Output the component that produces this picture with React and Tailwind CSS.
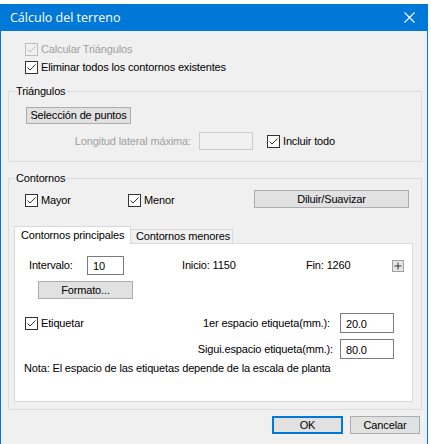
import React from "react";

function Check({ checked = true, disabled = false }) {
  return (
    <span
      className={`flex h-[13px] w-[13px] shrink-0 items-center justify-center border ${
        disabled ? "border-[#bcbcbc] bg-[#f0f0f0]" : "border-[#333333] bg-white"
      }`}
    >
      {checked && (
        <svg width="11" height="11" viewBox="0 0 11 11">
          <path
            d="M1.5 5.5 L4 8 L9.5 2.5"
            fill="none"
            stroke={disabled ? "#bcbcbc" : "#333333"}
            strokeWidth="1"
          />
        </svg>
      )}
    </span>
  );
}

function CheckRow({ label, disabled = false, className = "" }) {
  return (
    <div className={`flex h-[13px] items-center gap-[3px] ${className}`}>
      <Check disabled={disabled} />
      <span className={`whitespace-nowrap leading-[13px] ${disabled ? "text-[#a0a0a0]" : "text-black"}`}>{label}</span>
    </div>
  );
}

function Btn({ children, className = "" }) {
  return (
    <div className={`flex items-center justify-center whitespace-nowrap border border-[#adadad] bg-[#e1e1e1] leading-[13px] text-black ${className}`}>
      {children}
    </div>
  );
}

function Field({ value, className = "" }) {
  return (
    <div className={`flex items-center border border-[#7a7a7a] bg-white pl-[5px] pt-[2px] leading-[13px] ${className}`}>
      {value}
    </div>
  );
}

export default function App() {
  return (
    <div className="min-h-[444px] w-[431px] bg-white pt-[4px] font-['Liberation_Sans',Arial,sans-serif] text-[11px] tracking-[-0.15px] text-black">
      <div className="w-[428px] border-x border-b border-[#0078d7] bg-[#f0f0f0]">
        {/* title bar */}
        <div className="flex h-[27px] items-center justify-between bg-[#0078d7] pl-[9px] pr-[12px]">
          <span className="font-['Open_Sans','Noto_Sans',sans-serif] text-[12.5px] leading-[18px] tracking-normal text-white">
            Cálculo del terreno
          </span>
          <svg width="11" height="11" viewBox="0 0 11 11">
            <path d="M0.5 0.5 L10.5 10.5 M10.5 0.5 L0.5 10.5" stroke="#ffffff" strokeWidth="1.1" />
          </svg>
        </div>

        <div className="pt-[12px]">
          <div className="flex flex-col gap-[5px] pl-[24px]">
            <CheckRow label="Calcular Triángulos" disabled />
            <CheckRow label="Eliminar todos los contornos existentes" />
          </div>

          {/* Triángulos */}
          <fieldset className="ml-[7px] mt-[11px] w-[414px] border border-[#dcdcdc] pb-[11px]">
            <legend className="ml-[6px] px-[1px] leading-[13px]">Triángulos</legend>
            <div className="pl-[17px] pt-[9px]">
              <Btn className="h-[17px] w-[105px]">Selección de puntos</Btn>
            </div>
            <div className="mt-[8px] flex h-[18px] items-center">
              <span className="w-[182px] text-right leading-[13px] text-[#a0a0a0]">Longitud lateral máxima:</span>
              <div className="ml-[8px] h-[18px] w-[54px] border border-[#cccccc] bg-[#f0f0f0]" />
              <CheckRow label="Incluir todo" className="ml-[14px]" />
            </div>
          </fieldset>

          {/* Contornos */}
          <fieldset className="ml-[7px] mt-[10px] w-[414px] border border-[#dcdcdc] pb-[7px]">
            <legend className="ml-[6px] px-[1px] leading-[13px]">Contornos</legend>
            <div className="mt-[5px] flex h-[18px] items-end pl-[16px]">
              <CheckRow label="Mayor" className="mb-[1px] w-[103px]" />
              <CheckRow label="Menor" className="mb-[1px] w-[126px]" />
              <Btn className="h-[18px] w-[155px]">Diluir/Suavizar</Btn>
            </div>

            <div className="ml-[5px] mt-[18px] w-[399px]">
              <div className="relative z-10 -mb-[1px] flex items-end">
                <div className="flex h-[18px] w-[117px] items-center whitespace-nowrap border border-b-0 border-[#d9d9d9] bg-white pl-[6px] leading-[13px]">
                  Contornos principales
                </div>
                <div className="mb-[1px] flex h-[14px] w-[102px] items-center whitespace-nowrap border border-b-0 border-l-0 border-[#d9d9d9] bg-[#f0f0f0] pl-[5px] leading-[13px]">
                  Contornos menores
                </div>
              </div>
              <div className="h-[159px] border border-[#d9d9d9] bg-white pt-[12px]">
                <div className="flex h-[19px] items-center pl-[14px]">
                  <span className="w-[58px] leading-[13px]">Intervalo:</span>
                  <Field value="10" className="h-[19px] w-[37px]" />
                  <span className="ml-[58px] w-[124px] leading-[13px]">Inicio: 1150</span>
                  <span className="w-[86px] leading-[13px]">Fin: 1260</span>
                  <div className="flex h-[12px] w-[12px] items-center justify-center border border-[#a0a0a0] bg-[#e6e6e6]">
                    <svg width="8" height="8" viewBox="0 0 8 8">
                      <path d="M4 0.5 V7.5 M0.5 4 H7.5" stroke="#333333" strokeWidth="1" />
                    </svg>
                  </div>
                </div>
                <div className="ml-[23px] mt-[6px]">
                  <Btn className="h-[18px] w-[95px]">Formato...</Btn>
                </div>
                <div className="mt-[14px] flex h-[20px] items-center pl-[10px]">
                  <CheckRow label="Etiquetar" />
                  <span className="flex-1 text-right leading-[13px]">1er espacio etiqueta(mm.):</span>
                  <Field value="20.0" className="ml-[10px] mr-[18px] h-[20px] w-[54px]" />
                </div>
                <div className="mt-[6px] flex h-[20px] items-center">
                  <span className="flex-1 text-right leading-[13px]">Sigui.espacio etiqueta(mm.):</span>
                  <Field value="80.0" className="ml-[7px] mr-[18px] h-[20px] w-[54px]" />
                </div>
                <div className="mt-[3px] pl-[9px] leading-[13px]">
                  Nota: El espacio de las etiquetas depende de la escala de planta
                </div>
              </div>
            </div>
          </fieldset>

          <div className="mt-[6px] flex justify-end gap-[7px] pb-[10px] pr-[7px]">
            <div className="flex h-[18px] w-[71px] items-center justify-center border-2 border-[#0078d7] bg-[#e1e1e1] leading-[13px]">
              OK
            </div>
            <Btn className="h-[18px] w-[70px]">Cancelar</Btn>
          </div>
        </div>
      </div>
    </div>
  );
}
